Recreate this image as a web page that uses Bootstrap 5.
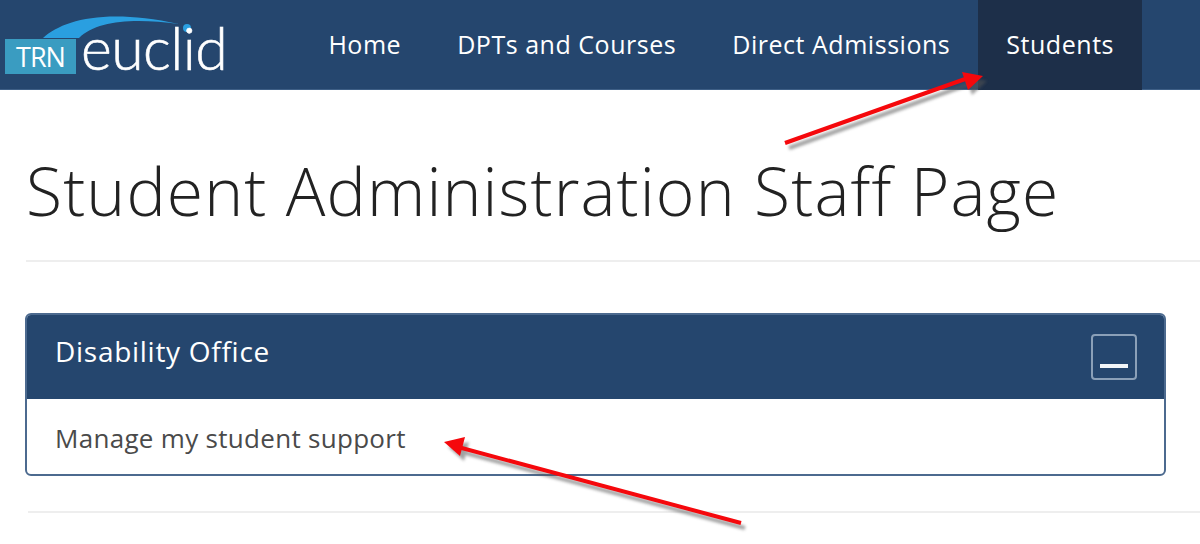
<!DOCTYPE html>
<html lang="en">
<head>
<meta charset="utf-8">
<title>Student Administration Staff Page</title>
<link href="https://cdn.jsdelivr.net/npm/bootstrap@5.3.0/dist/css/bootstrap.min.css" rel="stylesheet">
<style>
html,body{height:544px;overflow:hidden;}
body{font-family:"Open Sans","Noto Sans",sans-serif;background:#fff;color:#333;position:relative;}
.topbar{background:#25466e;height:90px;padding:0 0 0 5px;border-bottom:1px solid #3e5f86;}
.brandbox{width:224px;height:90px;flex:none;margin-right:71.4px;position:relative;}
.brandbox svg{position:absolute;left:0;top:0;}
.trn-tag{position:absolute;left:0;top:39px;width:71px;height:35px;background:#3a9cc1;color:#fff;font-size:27px;line-height:36px;text-align:center;letter-spacing:-1px;}
.euclid-word{position:absolute;left:76px;top:15px;color:#fff;font-family:"Lato",sans-serif;font-weight:300;font-size:59px;line-height:66px;letter-spacing:-.6px;-webkit-text-stroke:.6px #fff;}
.toplink{display:flex;align-items:center;height:90px;padding:0 28px;color:#fff;font-size:25px;letter-spacing:.53px;text-decoration:none;font-weight:400;}
.toplink.on{background:#1d2f49;}
.pagebody{padding:0 34px 0 26px;}
.pagetitle{font-size:66px;font-weight:300;line-height:88px;letter-spacing:1.13px;color:#222;margin:56px 0 0;white-space:nowrap;}
.softrule{height:2px;background:#eeeeee;margin-right:-34px;}
.rule-one{margin-top:26px;}
.rule-two{margin:35px -34px 0 2px;}
.boxpanel{margin-top:51px;margin-left:-1px;height:163px;border:2px solid #4c6a8f;border-radius:6px;overflow:hidden;}
.boxhead{background:#25466e;height:84px;padding:0 27px 12px 28px;color:#fff;font-size:28px;font-weight:400;letter-spacing:.72px;}
.collapser{width:46px;height:46px;border:2px solid #8ba0b8;border-radius:4px;background:transparent;padding:0;position:relative;margin-bottom:-12px;}
.collapser span{position:absolute;left:7px;right:7px;bottom:10px;height:4px;background:#f2f5f8;}
.boxtext{padding:22px 28px;font-size:26px;line-height:34px;color:#4a4a4a;letter-spacing:.3px;}
.marks{position:absolute;left:0;top:0;pointer-events:none;}
</style>
</head>
<body>
<nav class="topbar d-flex align-items-stretch">
  <div class="brandbox">
    <svg width="224" height="90" viewBox="0 0 224 90" aria-hidden="true">
      <path d="M38 38C58 20 100 8 174 24C130 18 92 20 74 38Z" fill="#2a9fe0"/>
      <circle cx="182" cy="28" r="4" fill="#2a9fe0"/>
    </svg>
    <div class="trn-tag">TRN</div>
    <div class="euclid-word">euclid</div>
  </div>
  <a class="toplink" href="#">Home</a>
  <a class="toplink" href="#">DPTs and Courses</a>
  <a class="toplink" href="#">Direct Admissions</a>
  <a class="toplink on" href="#">Students</a>
</nav>
<main class="pagebody">
  <h1 class="pagetitle">Student Administration Staff Page</h1>
  <div class="softrule rule-one"></div>
  <section class="boxpanel">
    <div class="boxhead d-flex align-items-center justify-content-between">
      <span>Disability Office</span>
      <button class="collapser" type="button" aria-label="Collapse"><span></span></button>
    </div>
    <div class="boxtext">Manage my student support</div>
  </section>
  <div class="softrule rule-two"></div>
</main>
<svg class="marks" width="1200" height="544" viewBox="0 0 1200 544" aria-hidden="true">
  <defs><filter id="soft" x="-10%" y="-30%" width="120%" height="170%"><feGaussianBlur stdDeviation="1.5"/></filter></defs>
  <g fill="#555" stroke="#555" opacity=".55" filter="url(#soft)" transform="translate(4 5)">
    <path d="M785 143L968 78" stroke-width="4" fill="none"/>
    <path d="M962 72L983 76L968 90Z" stroke="none"/>
    <path d="M741 523L458 447" stroke-width="4" fill="none"/>
    <path d="M444 442L465 437L460 456Z" stroke="none"/>
  </g>
  <g fill="#f5080c" stroke="#f5080c">
    <path d="M785 143L968 78" stroke-width="4" fill="none"/>
    <path d="M962 72L983 76L968 90Z" stroke="none"/>
    <path d="M741 523L458 447" stroke-width="4" fill="none"/>
    <path d="M444 442L465 437L460 456Z" stroke="none"/>
  </g>
</svg>
<script src="https://cdn.jsdelivr.net/npm/bootstrap@5.3.0/dist/js/bootstrap.bundle.min.js"></script>
</body>
</html>
